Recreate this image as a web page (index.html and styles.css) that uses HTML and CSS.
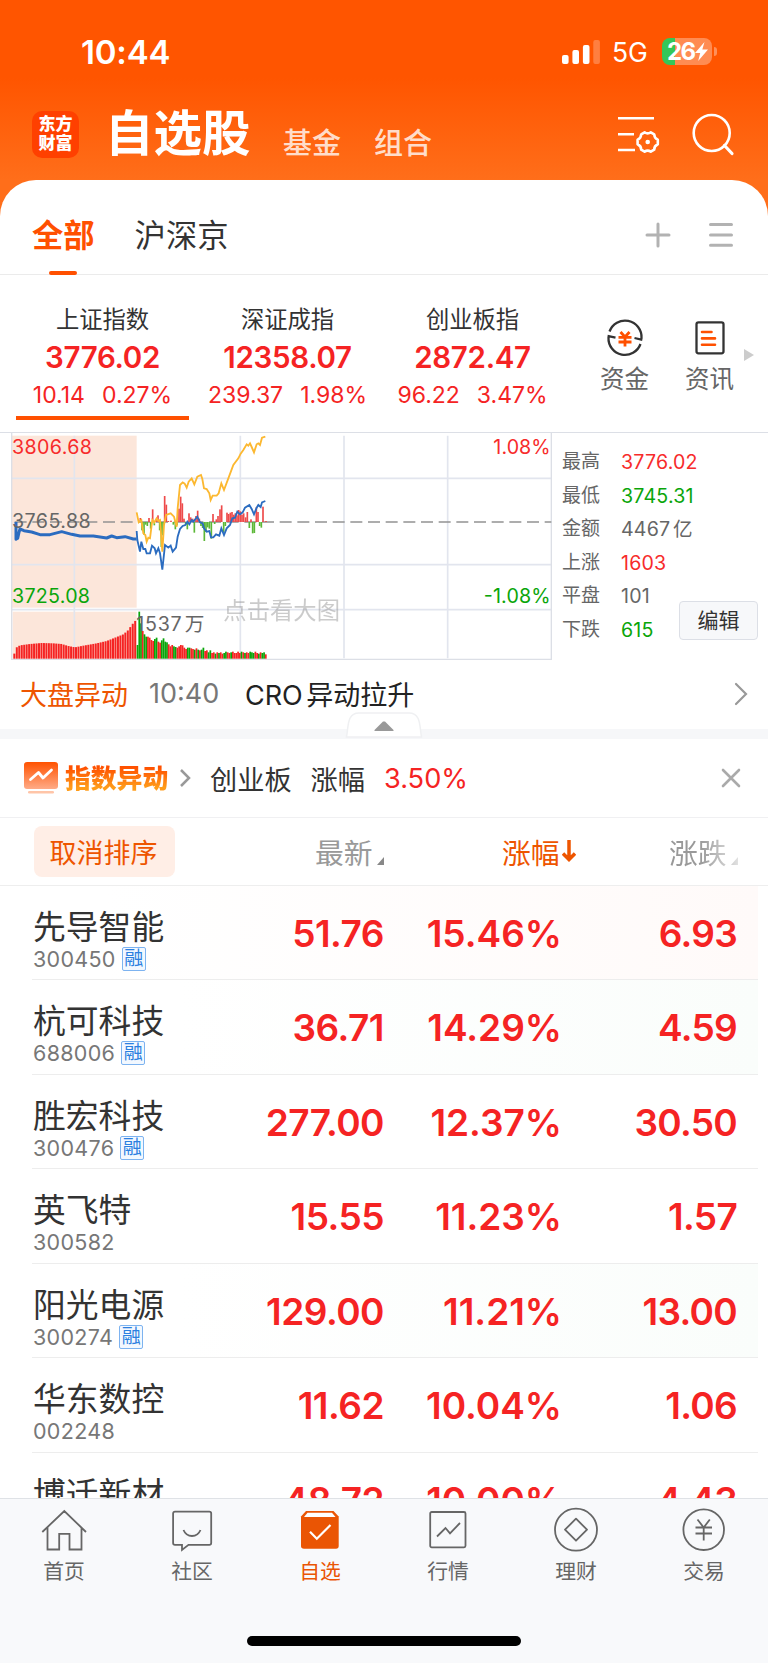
FILE: index.html
```html
<!DOCTYPE html>
<html lang="zh-CN">

<head>
    <meta charset="UTF-8">
    <meta name="viewport" content="width=device-width, initial-scale=1.0">
    <title>自选股</title>
    <link rel="stylesheet" href="styles.css">
</head>

<body>

    <div class="top">
        <div class="status">
            <div class="time">10:44</div>
            <svg class="signal" width="39" height="26" viewBox="0 0 39 26" fill="#fff">
                <rect x="0" y="16" width="6.6" height="9" rx="2" />
                <rect x="10.4" y="11" width="6.6" height="14" rx="2" />
                <rect x="20.9" y="6" width="6.6" height="19" rx="2" />
                <rect x="31.3" y="1" width="6.6" height="24" rx="2" opacity=".25" />
            </svg>
            <div class="network">5G</div>
            <div class="battery">
                <span>26</span>
                <svg width="13" height="19" viewBox="0 0 13 19"><path d="M9.500 0L0 11h5.200L3.200 19 13 7.500H7.300z" fill="#fff" /></svg>
            </div>
            <div class="battery-cap"></div>
        </div>

        <div class="header">
            <div class="logo">东方<br>财富</div>
            <h1>自选股</h1>
            <a class="sub">基金</a>
            <a class="sub">组合</a>
            <svg class="icon-manage" width="44" height="44" viewBox="0 0 44 44" fill="none" stroke="#fff" stroke-width="2.6">
                <path d="M2 6.300h36M2 22.200h16M2 38h17" />
                <path d="M28.600 20.300q3 2.300 6.200 0l3.400 2q0 3.800 3.600 5.400v4.600q-3.600 1.600-3.600 5.400l-3.400 2q-3.200-2.300-6.200 0l-3.400-2q0-3.800-3.600-5.400v-4.600q3.600-1.600 3.600-5.400z" stroke-linejoin="round" />
                <circle cx="31.700" cy="30" r="2.300" fill="#fff" stroke="none" />
            </svg>
            <svg class="icon-search" width="44" height="44" viewBox="0 0 44 44" fill="none" stroke="#fff" stroke-width="2.600" stroke-linecap="round">
                <circle cx="20.700" cy="20" r="18" />
                <path d="M33.500 32.500l7.500 8" stroke-width="3.200" />
            </svg>
        </div>
    </div>

    <div class="panel">
        <div class="groups">
            <a class="group active">全部</a>
            <a class="group">沪深京</a>
            <svg class="icon-add" width="26" height="26" viewBox="0 0 26 26" stroke="#b2b2b2" stroke-width="3" stroke-linecap="round"><path d="M2 13h22M13 2v22" /></svg>
            <svg class="icon-menu" width="26" height="26" viewBox="0 0 26 26" stroke="#b2b2b2" stroke-width="3" stroke-linecap="round"><path d="M2.500 2.500h21M2.500 13h21M2.500 23.300h21" /></svg>
        </div>

        <div class="indexes">
            <div class="index active">
                <div class="index-name">上证指数</div>
                <div class="index-value">3776.02</div>
                <div class="index-change"><span>10.14</span><span>0.27%</span></div>
            </div>
            <div class="index">
                <div class="index-name">深证成指</div>
                <div class="index-value">12358.07</div>
                <div class="index-change"><span>239.37</span><span>1.98%</span></div>
            </div>
            <div class="index">
                <div class="index-name">创业板指</div>
                <div class="index-value">2872.47</div>
                <div class="index-change"><span>96.22</span><span>3.47%</span></div>
            </div>
            <div class="shortcut">
                <svg width="40" height="40" viewBox="0 0 40 40" fill="none" stroke="#333" stroke-width="2.300">
                    <path d="M4.500 13.500A16.500 16.500 0 0 1 36.500 20l-.3 1.500-6.700-1.500M35.500 26A16.500 16.500 0 0 1 3.500 19.500l.2-1.300 6.800 1.500" />
                    <path d="M15.500 14l4.500 5 4.500-5M13.500 19.300h13M13.500 24h13M20 19v9.500" stroke="#ff5000" stroke-width="2.800" />
                </svg>
                <span>资金</span>
            </div>
            <div class="shortcut">
                <svg width="40" height="40" viewBox="0 0 40 40" fill="none" stroke="#333" stroke-width="2.300">
                    <rect x="6.500" y="4.300" width="27" height="31" rx="2" />
                    <path d="M12 14h9.500M12 20.400h13M12 26.700h13" stroke="#ff5000" stroke-width="2.600" stroke-linecap="round" />
                </svg>
                <span>资讯</span>
            </div>
            <div class="more"></div>
        </div>

        <div class="market">
            <svg class="chart" viewBox="0 21 1656 684" width="552" height="228">
                <rect x="36" y="32" width="374" height="516" fill="#fce6da" />
                <rect x="38" y="560" width="372" height="141" fill="#fce6da" />
                <g stroke="#e2e5ee" stroke-width="5" fill="none">
                    <path d="M36 160H1654M36 419H1654M36 554H1654M223 32V700M721 32V700M1032 32V700M1343 32V700" />
                    <path d="M35 24V703H1654V24" stroke="#dcdfe6" stroke-width="4" />
                </g>
                <path d="M44 291H1654" stroke="#929292" stroke-width="5" stroke-dasharray="36 17" />
                <g id="amplitude"></g>
                <g id="volume"></g>
                <polyline fill="none" stroke="#fcb830" stroke-width="5.500" points="410,262 416,292 424,285 430,325 436,330 440,350 445,338 450,340 457,285 463,292 470,280 475,288 480,285 487,380 492,300 498,270 512,265 522,275 530,305 533,250 540,180 548,172 554,176 560,188 566,170 575,160 583,178 592,155 603,150 607,162 612,190 620,192 628,205 632,225 638,212 650,212 656,205 664,175 672,195 685,160 700,120 715,100 722,86 730,75 740,58 745,62 750,55 755,66 762,82 770,58 775,55 780,60 786,38 796,35" />
                <polyline fill="none" stroke="#2b6cc0" stroke-width="9" stroke-linejoin="round" points="48,291 48,343 53,340 57,322 60,312 72,317 95,321 120,329 150,329 185,320 215,328 240,333 280,333 320,339 335,333 350,338 375,335 400,342 410,342" />
                <polyline fill="none" stroke="#2b6cc0" stroke-width="5.500" points="410,318 412,345 420,380 424,350 430,372 436,372 440,385 450,385 456,362 464,370 468,385 475,370 480,385 487,434 495,360 505,368 512,362 518,380 528,368 533,335 540,312 548,303 556,300 562,290 568,298 575,285 580,290 592,275 600,292 608,295 612,310 620,320 628,318 633,337 640,337 648,328 658,332 664,310 672,330 680,310 690,300 697,280 705,278 712,260 720,268 728,262 735,248 748,240 755,252 762,268 770,248 775,240 782,246 786,232 796,228" />
                <g class="chart-text">
                    <text class="up" x="36" y="86" textLength="240">3806.68</text>
                    <text x="36" y="309" textLength="236">3765.88</text>
                    <text class="down" x="36" y="534" textLength="234">3725.08</text>
                    <text class="up" x="1480" y="86" textLength="172">1.08%</text>
                    <text class="down" x="1451" y="534" textLength="201">-1.08%</text>
                    <text x="409" y="618" textLength="136">1537</text>
                    <text x="554" y="617">万</text>
                    <text class="hint" x="670" y="581" textLength="350">点击看大图</text>
                </g>
            </svg>
            <div class="stats">
                <div class="stat"><span>最高</span><b class="up">3776.02</b></div>
                <div class="stat"><span>最低</span><b class="down">3745.31</b></div>
                <div class="stat"><span>金额</span><b>4467 亿</b></div>
                <div class="stat"><span>上涨</span><b class="up">1603</b></div>
                <div class="stat"><span>平盘</span><b>101</b></div>
                <div class="stat"><span>下跌</span><b class="down">615</b></div>
                <button class="edit">编辑</button>
            </div>
        </div>

        <div class="news">
            <span class="news-tag">大盘异动</span>
            <span class="news-time">10:40</span>
            <span class="news-text">CRO 异动拉升</span>
            <svg width="16" height="24" viewBox="0 0 16 24" fill="none" stroke="#999" stroke-width="2.200" stroke-linecap="round"><path d="M3 2l10 10L3 22" /></svg>
        </div>
        <div class="divider">
            <svg class="collapse" width="78" height="26" viewBox="0 0 78 26">
                <path d="M1.500 25C3.500 14 2 1 14 1H64C76 1 74.500 14 76.500 25z" fill="#fff" stroke="#eff0f2" stroke-width="1.500" />
                <path d="M29.500 19v-1L38 9.500h2l8.500 8.500v1z" fill="#999" />
            </svg>
        </div>

        <div class="alert">
            <svg width="34" height="34" viewBox="0 0 34 34">
                <defs>
                    <linearGradient id="alertFill" x1="0" y1="0" x2="0" y2="1">
                        <stop offset="0" stop-color="#ff5200" />
                        <stop offset="1" stop-color="#ffab87" />
                    </linearGradient>
                </defs>
                <rect y="1" width="34" height="27" rx="3" fill="url(#alertFill)" />
                <rect x="4" y="30" width="26" height="2.600" rx="1.300" fill="#ffc5a8" />
                <path d="M6.500 18.500l8-7 4.500 5.500 8.500-8" fill="none" stroke="#fff" stroke-width="2.800" stroke-linecap="round" stroke-linejoin="round" />
            </svg>
            <span class="alert-title">指数异动</span>
            <svg class="alert-arrow" width="12" height="20" viewBox="0 0 12 20" fill="none" stroke="#999" stroke-width="2.500"><path d="M2 2l8 8-8 8" /></svg>
            <span class="alert-name">创业板</span>
            <span class="alert-name">涨幅</span>
            <span class="alert-rate">3.50%</span>
            <svg class="alert-close" width="20" height="20" viewBox="0 0 20 20" stroke="#aaa" stroke-width="2.600" stroke-linecap="round"><path d="M2 2l16 16M18 2L2 18" /></svg>
        </div>

        <div class="sort">
            <button class="reset">取消排序</button>
            <div class="col col-price">最新<i class="corner"></i></div>
            <div class="col col-rate">涨幅<svg width="14" height="22" viewBox="0 0 14 22" fill="none" stroke="#ee5500" stroke-width="3.500"><path d="M7 0v20M1 13.500l6 6 6-6" /></svg></div>
            <div class="col col-diff">涨跌<i class="corner"></i></div>
        </div>

        <div class="list">
            <div class="stock rise">
                <div class="stock-name">先导智能<div class="code">300450<em>融</em></div></div>
                <div class="price">51.76</div>
                <div class="rate">15.46%</div>
                <div class="diff">6.93</div>
            </div>
            <div class="stock fall">
                <div class="stock-name">杭可科技<div class="code">688006<em>融</em></div></div>
                <div class="price">36.71</div>
                <div class="rate">14.29%</div>
                <div class="diff">4.59</div>
            </div>
            <div class="stock">
                <div class="stock-name">胜宏科技<div class="code">300476<em>融</em></div></div>
                <div class="price">277.00</div>
                <div class="rate">12.37%</div>
                <div class="diff">30.50</div>
            </div>
            <div class="stock">
                <div class="stock-name">英飞特<div class="code">300582</div></div>
                <div class="price">15.55</div>
                <div class="rate">11.23%</div>
                <div class="diff">1.57</div>
            </div>
            <div class="stock fall">
                <div class="stock-name">阳光电源<div class="code">300274<em>融</em></div></div>
                <div class="price">129.00</div>
                <div class="rate">11.21%</div>
                <div class="diff">13.00</div>
            </div>
            <div class="stock">
                <div class="stock-name">华东数控<div class="code">002248</div></div>
                <div class="price">11.62</div>
                <div class="rate">10.04%</div>
                <div class="diff">1.06</div>
            </div>
            <div class="stock">
                <div class="stock-name">博迁新材</div>
                <div class="price">48.72</div>
                <div class="rate">10.00%</div>
                <div class="diff">4.43</div>
            </div>
        </div>
    </div>

    <div class="tabbar">
        <a class="tab">
            <svg width="48" height="48" viewBox="0 0 48 48"><path d="M2.300 26L24.300 5 46 26M7.500 21.500V43.500H19.200V27.800H29.500V43.500H41.500V21.500" /></svg>
            首页
        </a>
        <a class="tab">
            <svg width="48" height="48" viewBox="0 0 48 48"><path d="M7 5.700H41.300Q43.200 5.700 43.200 7.600V37Q43.200 38.900 41.300 38.900H20.500L14 44V38.900H7Q5.100 38.900 5.100 37V7.600Q5.100 5.700 7 5.700zM15.500 24Q18 30 24 30T32.500 24" /></svg>
            社区
        </a>
        <a class="tab active">
            <svg width="48" height="48" viewBox="0 0 48 48">
                <path d="M10 5H37.500L42.700 10.500V40Q42.700 42.800 40 42.800H8Q5 42.800 5 40V10.500z" fill="#ea5504" stroke="none" />
                <path d="M11.500 6.800H36L39.500 11H8z" fill="#fff" stroke="none" />
                <path d="M14 25.800L20.800 32.800 34.500 19" stroke="#fff" stroke-width="2.200" />
            </svg>
            自选
        </a>
        <a class="tab">
            <svg width="48" height="48" viewBox="0 0 48 48"><rect x="6.200" y="6" width="35.300" height="35.300" rx="1.500" /><path d="M13 30.500L21.500 22 26 27.300 36 17" /></svg>
            行情
        </a>
        <a class="tab">
            <svg width="48" height="48" viewBox="0 0 48 48"><circle cx="24" cy="23.700" r="21" /><path d="M24 12.700L35 23.700 24 34.700 13 23.700z" stroke-linejoin="round" /></svg>
            理财
        </a>
        <a class="tab">
            <svg width="48" height="48" viewBox="0 0 48 48"><circle cx="23.700" cy="23.700" r="20.300" /><path d="M17.500 13.500L23.700 21.500 29.800 13.500M15.500 21.500H32M15.500 27.500H32M23.700 21.500V34.500" /></svg>
            交易
        </a>
        <div class="home-indicator"></div>
    </div>

    <script src="chart.js"></script>

</body>

</html>
```
FILE: styles.css
```css
* {
    box-sizing: border-box;
}

body {
    margin: 0;
    width: 768px;
    height: 1663px;
    overflow: hidden;
    display: flex;
    flex-direction: column;
    background-color: #fff;
    color: #333;
    font-family: Inter, "Noto Sans CJK SC", sans-serif;
    white-space: nowrap;
}

svg {
    display: block;
    flex: none;
}

button {
    font-family: inherit;
    padding: 0;
    border: none;
}

.up {
    color: #f72b2b;
    fill: #f72b2b;
}

.down {
    color: #0aa50a;
    fill: #0aa50a;
}

.top {
    height: 220px;
    flex: none;
    background: linear-gradient(#ff5500 0, #ff5500 78px, #ff6e1a 180px);
    color: #fff;
}

.status {
    display: flex;
    align-items: center;
    height: 103px;
    padding-left: 81px;
}

.time {
    width: 481px;
    font-size: 33px;
    font-weight: 600;
    letter-spacing: -.2px;
}

.signal {
    margin-right: 11px;
}

.network {
    width: 50px;
    font-size: 26.5px;
}

.battery {
    display: flex;
    align-items: center;
    width: 50px;
    height: 27px;
    padding-left: 5px;
    border-radius: 8px;
    background: linear-gradient(90deg, #34c759 13px, rgba(255, 255, 255, .32) 13px);
    font-size: 24px;
    font-weight: 700;
    letter-spacing: -1.5px;
}

.battery-cap {
    width: 3px;
    height: 9px;
    margin-left: 2px;
    border-radius: 0 4px 4px 0;
    background-color: rgba(255, 255, 255, .35);
}

.header {
    display: flex;
    align-items: center;
    height: 62px;
    padding-left: 32px;
}

.logo {
    width: 47px;
    height: 47px;
    padding-top: 4px;
    border-radius: 10px;
    background-color: #ff4000;
    font-size: 17px;
    font-weight: 900;
    line-height: 19.5px;
    text-align: center;
}

.header h1 {
    width: 178px;
    margin: 0 0 0 26px;
    font-size: 48.5px;
    font-weight: 700;
    line-height: 60px;
}

.sub {
    width: 91px;
    margin-top: 19px;
    font-size: 29px;
    line-height: 40px;
    font-weight: 500;
    color: rgba(255, 255, 255, .8);
}

.icon-manage {
    margin-left: 151px;
}

.icon-search {
    margin-left: 31px;
    margin-top: 2px;
}

.panel {
    height: 1318px;
    flex: none;
    margin-top: -40px;
    border-radius: 36px 36px 0 0;
    background-color: #fff;
    overflow: hidden;
}

.groups {
    display: flex;
    align-items: center;
    height: 95px;
    padding: 0 34px 0 32px;
    border-bottom: 1.5px solid #ebebeb;
}

.group {
    display: flex;
    flex-direction: column;
    height: 95px;
    padding-top: 16px;
    margin-right: 40px;
    font-size: 31.3px;
    line-height: 80px;
}

.group.active {
    color: #ff5000;
    font-weight: 700;
}

.group.active::after {
    content: "";
    flex: none;
    width: 28px;
    height: 4px;
    margin: -5px auto 0;
    border-radius: 2px;
    background-color: #ff5000;
}

.icon-add {
    margin-left: auto;
    margin-right: 37px;
    margin-top: 16px;
}

.icon-menu {
    margin-top: 16px;
}

.indexes {
    display: flex;
    height: 157px;
    padding-left: 10px;
}

.index {
    width: 185px;
    padding-top: 27px;
    text-align: center;
}

.index.active {
    background: linear-gradient(#ff5000, #ff5000) 6px 141px / 173px 4px no-repeat;
}

.index-name {
    font-size: 23.3px;
    line-height: 36px;
}

.index-value {
    color: #f52323;
    font-size: 29.5px;
    font-weight: 600;
    line-height: 38px;
    letter-spacing: -.3px;
}

.index-change {
    display: flex;
    justify-content: center;
    gap: 17px;
    color: #f52323;
    font-size: 23px;
    line-height: 38px;
}

.shortcut {
    display: flex;
    flex-direction: column;
    align-items: center;
    width: 85px;
    padding-top: 43px;
    color: #666;
    font-size: 24.5px;
    line-height: 42px;
}

.indexes .shortcut:nth-child(4) {
    margin-left: 17px;
}

.more {
    height: 0;
    margin: 74px 0 0 -8px;
    border: 6px solid transparent;
    border-left: 10px solid #ccc;
    border-right: none;
}

.market {
    display: flex;
    height: 228px;
    border-top: 1.5px solid #dcdfe6;
}

.chart {
    margin-top: -1px;
}

.chart-text {
    font-size: 59px;
    fill: #666;
}

.chart-text .hint {
    font-size: 70px;
    fill: #999;
    opacity: .5;
}

.stats {
    position: relative;
    flex: 1;
    padding: 12px 0 0 10px;
}

.stat {
    display: flex;
    height: 33.5px;
    line-height: 34px;
    font-size: 19px;
    color: #666;
}

.stat span {
    width: 59px;
}

.stat b {
    font-size: 19.6px;
    font-weight: 400;
    letter-spacing: .2px;
    word-spacing: -3px;
}

.edit {
    position: absolute;
    right: 10px;
    bottom: 20px;
    width: 79px;
    height: 39px;
    padding-bottom: 3px;
    border: 1px solid #dcdfe6;
    border-radius: 4px;
    background-color: #f7f8fa;
    color: #333;
    font-size: 21px;
}

.news {
    display: flex;
    align-items: center;
    height: 69px;
    padding: 0 19px 2px 20px;
    font-size: 27px;
}

.news-tag {
    width: 129px;
    color: #ee5500;
}

.news-time {
    width: 96px;
    color: #777;
}

.news-text {
    flex: 1;
    color: #222;
    word-spacing: -4px;
}

.divider {
    position: relative;
    height: 10px;
    background-color: #f6f7f9;
}

.collapse {
    position: absolute;
    left: 345px;
    bottom: 1px;
}

.alert {
    display: flex;
    align-items: center;
    height: 78.5px;
    padding: 0 27px 0 24px;
    border-bottom: 1.5px solid #f0f0f2;
    font-size: 27.2px;
}

.alert-title {
    width: 114px;
    margin-left: 7px;
    margin-bottom: 2px;
    background: linear-gradient(#ff5000 25%, #ff9c1a 80%);
    -webkit-background-clip: text;
    background-clip: text;
    color: transparent;
    font-size: 25.8px;
    font-weight: 900;
}

.alert-arrow {
    margin-right: 19px;
}

.alert-name {
    margin-right: 19px;
}

.alert-rate {
    flex: 1;
    margin-top: 2px;
    color: #f52323;
}

.sort {
    display: flex;
    align-items: center;
    height: 68px;
    padding-left: 34px;
    border-bottom: 1.5px solid #eee;
}

.reset {
    width: 141px;
    height: 51px;
    padding-right: 2px;
    border-radius: 8px;
    background-color: #ffeee6;
    color: #ee5500;
    font-size: 27px;
}

.col {
    display: flex;
    align-items: center;
    font-size: 28.8px;
    color: #999;
}

.col-price {
    width: 187px;
    margin-left: 140px;
}

.col-rate {
    width: 167px;
    gap: 2px;
    color: #ee5500;
}

.col-diff {
    -webkit-mask-image: linear-gradient(90deg, #000 45%, rgba(0, 0, 0, .25));
    mask-image: linear-gradient(90deg, #000 45%, rgba(0, 0, 0, .25));
}

.corner {
    margin: 20px 0 0 4px;
    border-left: 7px solid transparent;
    border-bottom: 8px solid #888;
}

.stock {
    display: flex;
    height: 94.5px;
    margin-left: 32px;
    margin-right: 10px;
    border-bottom: 1.5px solid #ededed;
    color: #f52323;
    font-size: 37px;
    font-weight: 600;
    line-height: 95px;
    text-align: right;
}

.stock.rise {
    background: linear-gradient(90deg, #fff 10%, #fffaf9);
}

.stock.fall {
    background: linear-gradient(90deg, #fff 20%, #fafdfb);
}

.stock-name {
    width: 170px;
    padding-left: 1px;
    color: #333;
    font-size: 32.8px;
    font-weight: 400;
    line-height: 83px;
    text-align: left;
}

.code {
    display: flex;
    align-items: center;
    height: 24px;
    margin-top: -22px;
    color: #777;
    font-size: 21.5px;
    letter-spacing: .3px;
    line-height: 24px;
}

.code em {
    width: 24px;
    height: 24px;
    margin-left: 6px;
    border: 1.5px solid #7db3f0;
    border-radius: 2px;
    background-color: #f2f8ff;
    color: #2b7fe0;
    font-size: 19px;
    font-style: normal;
    letter-spacing: 0;
    line-height: 21px;
    text-align: center;
}

.price {
    width: 182px;
    letter-spacing: -.5px;
}

.rate {
    width: 178px;
}

.diff {
    width: 175px;
    letter-spacing: -.7px;
}

.tabbar {
    position: relative;
    flex: none;
    display: flex;
    height: 165px;
    padding-top: 7px;
    border-top: 1.5px solid #dfe2e6;
    background-color: #f8f9fb;
}

.tab {
    display: flex;
    flex-direction: column;
    align-items: center;
    width: 128px;
    color: #666;
    font-size: 20.8px;
    line-height: 35px;
}

.tab svg {
    fill: none;
    stroke: #666;
    stroke-width: 1.8;
}

.tab.active {
    color: #ea5504;
}

.home-indicator {
    position: absolute;
    left: 247px;
    bottom: 17px;
    width: 274px;
    height: 10px;
    border-radius: 5px;
    background-color: #000;
}
```
FILE: chart.js
```js
const SVG_NS = 'http://www.w3.org/2000/svg';
const RED = '#f52323';
const GREEN = '#0aa50a';

function bar(parent, x, y, width, height, fill) {
    const rect = document.createElementNS(SVG_NS, 'rect');
    rect.setAttribute('x', x);
    rect.setAttribute('y', y);
    rect.setAttribute('width', width);
    rect.setAttribute('height', height);
    rect.setAttribute('fill', fill);
    parent.appendChild(rect);
}

// [x, height]: positive goes up, negative goes down
const amplitude = [
    [421, 12], [426, -25], [432, -38], [437, -8], [442, -12], [447, 12], [452, -20], [458, 38],
    [463, -10], [468, 8], [474, 20], [479, -25], [484, -75], [489, -40], [494, 78], [499, 52],
    [505, 3], [513, 4], [520, -8], [526, -22], [531, -10], [537, 40], [542, 76], [547, 56],
    [552, 10], [557, -8], [562, -22], [567, 26], [572, 14], [578, 10], [583, -32], [588, 18],
    [593, 34], [598, 10], [603, -12], [608, -18], [613, -57], [618, -30], [623, -16], [628, -20],
    [634, -50], [639, 24], [644, -6], [649, 8], [654, 18], [660, 38], [665, 50], [671, -30],
    [676, -12], [681, 28], [686, 24], [691, 28], [696, 30], [701, 22], [706, 26], [711, 20],
    [716, 36], [721, 32], [726, 22], [731, 26], [737, 14], [742, 30], [748, -18], [753, 8],
    [758, -34], [763, -33], [769, 44], [774, 30], [779, -12], [784, -17], [789, 46], [798, 3]
];

const amplitudeGroup = document.getElementById('amplitude');
amplitude.forEach(([x, h]) => {
    bar(amplitudeGroup, x - 2.5, h > 0 ? 291 - h : 291, 5, Math.abs(h), h > 0 ? '#ee4a4a' : '#5cb837');
});

// top edge of the volume area
const volumeTop = [
    [38, 690], [44, 685], [50, 667], [60, 661], [90, 657], [125, 654], [160, 655], [185, 657],
    [205, 663], [225, 667], [250, 662], [290, 655], [320, 648], [345, 638], [370, 628],
    [385, 615], [395, 600], [408, 585]
];

const volumeGroup = document.getElementById('volume');

function topAt(x) {
    for (let i = 1; i < volumeTop.length; i++) {
        const [x0, y0] = volumeTop[i - 1];
        const [x1, y1] = volumeTop[i];
        if (x <= x1) return y0 + (y1 - y0) * (x - x0) / (x1 - x0);
    }
    return volumeTop[volumeTop.length - 1][1];
}

for (let x = 40; x < 405; x += 7.4) {
    const y = topAt(x + 3);
    bar(volumeGroup, x, y, 6, 701 - y, RED);
}

const trades = [
    660, 560, 595, 618, 628, 635, 635, 638, 645, 648, 642, 638, 650, 653, 646, 640, 650, 652, 658,
    664, 660, 664, 666, 668, 664, 660, 661, 668, 672, 668, 668, 670, 672, 674, 670, 674, 676, 674,
    668, 678, 676, 682, 676, 684, 682, 686, 682, 684, 682, 686, 684, 680, 682, 684, 682, 680, 684,
    684, 680, 684, 680, 682, 684, 682, 684, 680, 682, 684, 680, 684, 686, 682, 684, 682, 688
];
const colors = 'gggrggrrrrggrrggggrrrggrrrrrrggrrgrgrggrrggrrgrgrrggrrgrrrrrgrgrrgggrrgrggr';

trades.forEach((y, i) => {
    bar(volumeGroup, 410 + i * 5.2, y, 5.2, 701 - y, colors[i] === 'g' ? GREEN : RED);
});
```
